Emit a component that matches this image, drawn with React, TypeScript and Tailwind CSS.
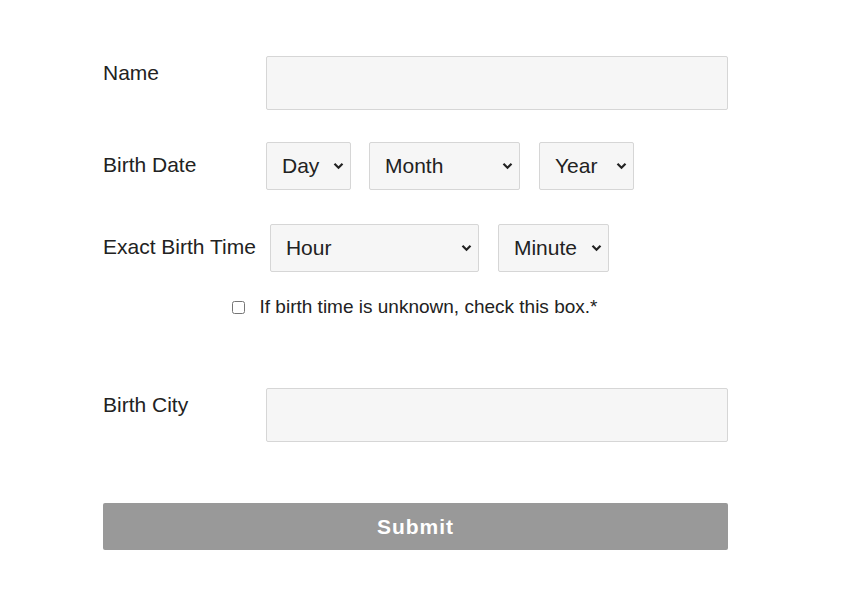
import { useState } from "react";

const font = { fontFamily: '"Liberation Sans", Arial, sans-serif' };

type SelectProps = {
    placeholder: string;
    width: string;
    options: string[];
};

const Chevron = () => (
    <svg
        className="pointer-events-none absolute right-[7px] top-1/2 -translate-y-1/2"
        width="11"
        height="8"
        viewBox="0 0 11 8"
        fill="none"
    >
        <path d="M1.5 1.8L5.5 5.8L9.5 1.8" stroke="#222" strokeWidth="2.2" />
    </svg>
);

const FancySelect = ({ placeholder, width, options }: SelectProps) => {
    const [value, setValue] = useState("");
    return (
        <div className={`relative ${width} h-[48px] shrink-0`}>
            <select
                value={value}
                onChange={(e) => setValue(e.target.value)}
                className="h-full w-full appearance-none rounded-[2px] border border-[#d6d6d6] bg-[#f6f6f6] pl-[15px] pr-[22px] text-[21px] leading-[24px] text-[#222] outline-none"
                style={font}
            >
                <option value="">{placeholder}</option>
                {options.map((o) => (
                    <option key={o} value={o}>
                        {o}
                    </option>
                ))}
            </select>
            <Chevron />
        </div>
    );
};

const range = (a: number, b: number) =>
    Array.from({ length: b - a + 1 }, (_, i) => String(a + i));

const months = [
    "January", "February", "March", "April", "May", "June",
    "July", "August", "September", "October", "November", "December",
];

export default function App() {
    const [unknown, setUnknown] = useState(false);

    return (
        <div className="min-h-[596px] bg-white pl-[103px] pt-[56px]" style={font}>
            <form className="w-[625px] text-[#222]" onSubmit={(e) => e.preventDefault()}>
                {/* name */}
                <div className="flex items-start">
                    <label className="min-w-[163px] pr-[14px] pt-[5px] text-[21px] leading-[24px]">Name</label>
                    <input
                        type="text"
                        className="h-[54px] w-[462px] rounded-[2px] border border-[#d6d6d6] bg-[#f6f6f6] px-3 text-[21px] outline-none"
                    />
                </div>

                {/* birth date */}
                <div className="mt-[32px] flex items-start">
                    <label className="min-w-[163px] pr-[14px] pt-[11px] text-[21px] leading-[24px]">Birth Date</label>
                    <div className="flex">
                        <FancySelect placeholder="Day" width="w-[85px] mr-[18px]" options={range(1, 31)} />
                        <FancySelect placeholder="Month" width="w-[151px] mr-[19px]" options={months} />
                        <FancySelect placeholder="Year" width="w-[95px]" options={range(1920, 2024)} />
                    </div>
                </div>

                {/* birth time */}
                <div className="mt-[34px] flex items-start">
                    <label className="min-w-[163px] pr-[14px] pt-[11px] text-[21px] leading-[24px]">Exact Birth Time</label>
                    <div className="flex gap-[19px]">
                        <FancySelect placeholder="Hour" width="w-[209px]" options={range(0, 23)} />
                        <FancySelect placeholder="Minute" width="w-[111px]" options={range(0, 59)} />
                    </div>
                </div>

                <div className="mt-[24px] flex items-center justify-center pr-[2px]">
                    <input
                        type="checkbox"
                        checked={unknown}
                        onChange={(e) => setUnknown(e.target.checked)}
                        className="m-0 h-[13px] w-[13px]"
                    />
                    <span className="ml-[15px] text-[19px] leading-[22px]">If birth time is unknown, check this box.*</span>
                </div>

                {/* city */}
                <div className="mt-[70px] flex items-start">
                    <label className="min-w-[163px] pr-[14px] pt-[5px] text-[21px] leading-[24px]">Birth City</label>
                    <input
                        type="text"
                        className="h-[54px] w-[462px] rounded-[2px] border border-[#d6d6d6] bg-[#f6f6f6] px-3 text-[21px] outline-none"
                    />
                </div>

                <button
                    type="submit"
                    className="mt-[61px] h-[47px] w-[625px] rounded-[2px] bg-[#999999] text-[21px] leading-[24px] font-bold tracking-[1px] text-white"
                >
                    Submit
                </button>
            </form>
        </div>
    );
}
